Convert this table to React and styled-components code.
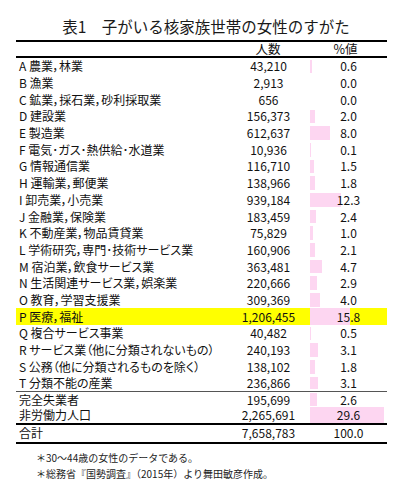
import React from "react";
import styled, { createGlobalStyle } from "styled-components";

const Global = createGlobalStyle`
  html, body { margin: 0; padding: 0; background: #fff; }
  body {
    font-family: "Noto Sans CJK JP", "Noto Sans", sans-serif;
    color: #111;
  }
`;

const Page = styled.div`
  width: 406px;
  height: 500px;
  box-sizing: border-box;
  padding-top: 16px;
`;

const Title = styled.h1`
  margin: 0;
  font-size: 15.5px;
  font-weight: 400;
  line-height: 20px;
  text-align: center;
  color: #1a1a1a;
  padding-left: 6px;
`;

const Table = styled.div`
  margin: 4px 0 0 16px;
  width: 371px;
  border-top: 2px solid #000;
  border-bottom: 2px solid #000;
  font-size: 12px;
  font-feature-settings: "palt";
`;

const Row = styled.div`
  display: grid;
  grid-template-columns: 210px 84px 77px;
  height: ${(p) => p.$h}px;
  align-items: stretch;
  background: ${(p) => (p.$hl ? "#ffff00" : "transparent")};
  border-bottom: ${(p) => p.$border || "none"};
  border-top: ${(p) => p.$borderTop || "none"};
`;

const Label = styled.div`
  display: flex;
  align-items: center;
  padding-left: 3px;
  white-space: nowrap;
  line-height: 1;
`;

const Num = styled.div`
  display: flex;
  align-items: center;
  justify-content: center;
  line-height: 1;
  padding-left: 1px;
`;

const Pct = styled.div`
  position: relative;
  display: flex;
  align-items: center;
  justify-content: center;
  line-height: 1;
`;

const Bar = styled.span`
  position: absolute;
  left: 0;
  top: ${(p) => (p.$full ? 0 : 1.5)}px;
  bottom: ${(p) => (p.$full ? 0 : 1.5)}px;
  background: #fdd6f1;
`;

const PctText = styled.span`
  position: relative;
`;

const HeadCell = styled.div`
  display: flex;
  align-items: center;
  justify-content: center;
  line-height: 1;
  font-size: 12.5px;
  padding-right: ${(p) => p.$pr || 0}px;
`;

const Notes = styled.div`
  padding: 6px 0 0 36px;
  font-size: 10px;
  line-height: 16px;
  color: #222;
`;

const rows = [
  ["A 農業，林業", "43,210", 0.6],
  ["B 漁業", "2,913", 0.0],
  ["C 鉱業，採石業，砂利採取業", "656", 0.0],
  ["D 建設業", "156,373", 2.0],
  ["E 製造業", "612,637", 8.0],
  ["F 電気･ガス･熱供給･水道業", "10,936", 0.1],
  ["G 情報通信業", "116,710", 1.5],
  ["H 運輸業，郵便業", "138,966", 1.8],
  ["I 卸売業，小売業", "939,184", 12.3],
  ["J 金融業，保険業", "183,459", 2.4],
  ["K 不動産業，物品賃貸業", "75,829", 1.0],
  ["L 学術研究，専門･技術サービス業", "160,906", 2.1],
  ["M 宿泊業，飲食サービス業", "363,481", 4.7],
  ["N 生活関連サービス業，娯楽業", "220,666", 2.9],
  ["O 教育，学習支援業", "309,369", 4.0],
  ["P 医療，福祉", "1,206,455", 15.8, true],
  ["Q 複合サービス事業", "40,482", 0.5],
  ["R サービス業（他に分類されないもの）", "240,193", 3.1],
  ["S 公務（他に分類されるものを除く）", "138,102", 1.8],
  ["T 分類不能の産業", "236,866", 3.1],
];

const extra = [
  ["完全失業者", "195,699", 2.6],
  ["非労働力人口", "2,265,691", 29.6],
];

function DataRow({ label, num, pct, hl, h, border, borderTop, noBar, full }) {
  return (
    <Row $hl={hl} $h={h} $border={border} $borderTop={borderTop}>
      <Label>{label}</Label>
      <Num>{num}</Num>
      <Pct>
        {!noBar && pct > 0 && <Bar $full={full} style={{ width: `${pct * 2.5}px` }} />}
        <PctText>{pct.toFixed(1)}</PctText>
      </Pct>
    </Row>
  );
}

export default function App() {
  return (
    <Page>
      <Global />
      <Title>表1　子がいる核家族世帯の女性のすがた</Title>
      <Table>
        <Row $h={14} $border="2px solid #000">
          <HeadCell />
          <HeadCell>人数</HeadCell>
          <HeadCell $pr={6}>%値</HeadCell>
        </Row>
        {rows.map(([l, n, p, hl], i) => (
          <DataRow
            key={l}
            label={l}
            num={n}
            pct={p}
            hl={hl}
            full={hl}
            h={i === rows.length - 1 ? 15.7 : 16.7}
            border={i === rows.length - 1 ? "1px solid #555" : undefined}
          />
        ))}
        {extra.map(([l, n, p], i) => (
          <DataRow key={l} label={l} num={n} pct={p} h={15.5} full={i === 1} />
        ))}
        <DataRow label="合計" num="7,658,783" pct={100} h={17} noBar borderTop="2px solid #000" />
      </Table>
      <Notes>
        <div>＊30～44歳の女性のデータである。</div>
        <div>＊総務省『国勢調査』（2015年）より舞田敏彦作成。</div>
      </Notes>
    </Page>
  );
}
